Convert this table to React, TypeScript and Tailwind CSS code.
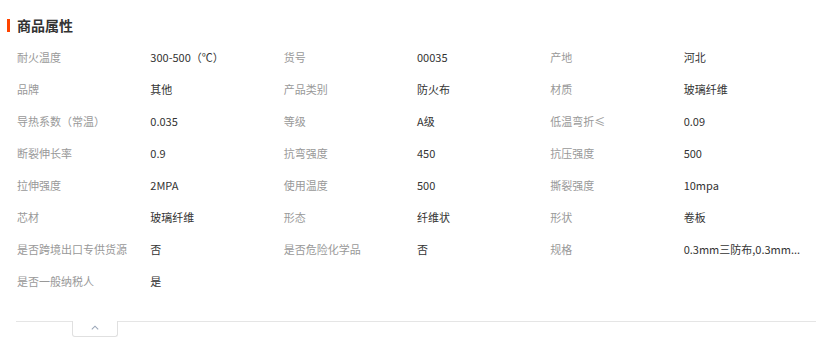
import React from "react";

const rows: [string, string][][] = [
  [["耐火温度", "300-500（℃）"], ["货号", "00035"], ["产地", "河北"]],
  [["品牌", "其他"], ["产品类别", "防火布"], ["材质", "玻璃纤维"]],
  [["导热系数（常温）", "0.035"], ["等级", "A级"], ["低温弯折≤", "0.09"]],
  [["断裂伸长率", "0.9"], ["抗弯强度", "450"], ["抗压强度", "500"]],
  [["拉伸强度", "2MPA"], ["使用温度", "500"], ["撕裂强度", "10mpa"]],
  [["芯材", "玻璃纤维"], ["形态", "纤维状"], ["形状", "卷板"]],
  [["是否跨境出口专供货源", "否"], ["是否危险化学品", "否"], ["规格", "0.3mm三防布,0.3mm..."]],
  [["是否一般纳税人", "是"]],
];

export default function App() {
  return (
    <div
      className="w-[832px] h-[363px] bg-white"
      style={{ fontFamily: '"Microsoft YaHei", "Noto Sans CJK SC", "Noto Sans", sans-serif' }}
    >
      <div className="flex items-center pt-[17px] pl-[7px] h-[33px]">
        <div className="w-[3px] h-[13px] bg-[#ff4400]" />
        <div className="ml-[7px] text-[14px] font-bold text-[#333] leading-[16px]">商品属性</div>
      </div>
      <div className="ml-[16px] w-[800px] mt-[8px]">
        {rows.map((r, i) => (
          <div key={i} className="grid grid-cols-6 h-[32px] items-center text-[11px] leading-[16px]">
            {r.map(([k, v], j) => (
              <React.Fragment key={j}>
                <div className="pl-px text-[#999] whitespace-nowrap">{k}</div>
                <div className="pl-px text-[#333] whitespace-nowrap overflow-hidden">{v}</div>
              </React.Fragment>
            ))}
          </div>
        ))}
      </div>
      <div className="ml-[16px] w-[800px] mt-[24px] border-t border-[#e5e5e5]">
        <div className="ml-[56px] w-[46px] h-[16px] border border-t-0 border-[#e0e0e0] rounded-b-[3px] flex items-center justify-center bg-white -mt-px">
          <svg width="8" height="5" viewBox="0 0 8 5" className="mt-[-3px]">
            <path d="M0.8 4.3 L4 1.2 L7.2 4.3" fill="none" stroke="#9aa6b8" strokeWidth="1.1" />
          </svg>
        </div>
      </div>
    </div>
  );
}
